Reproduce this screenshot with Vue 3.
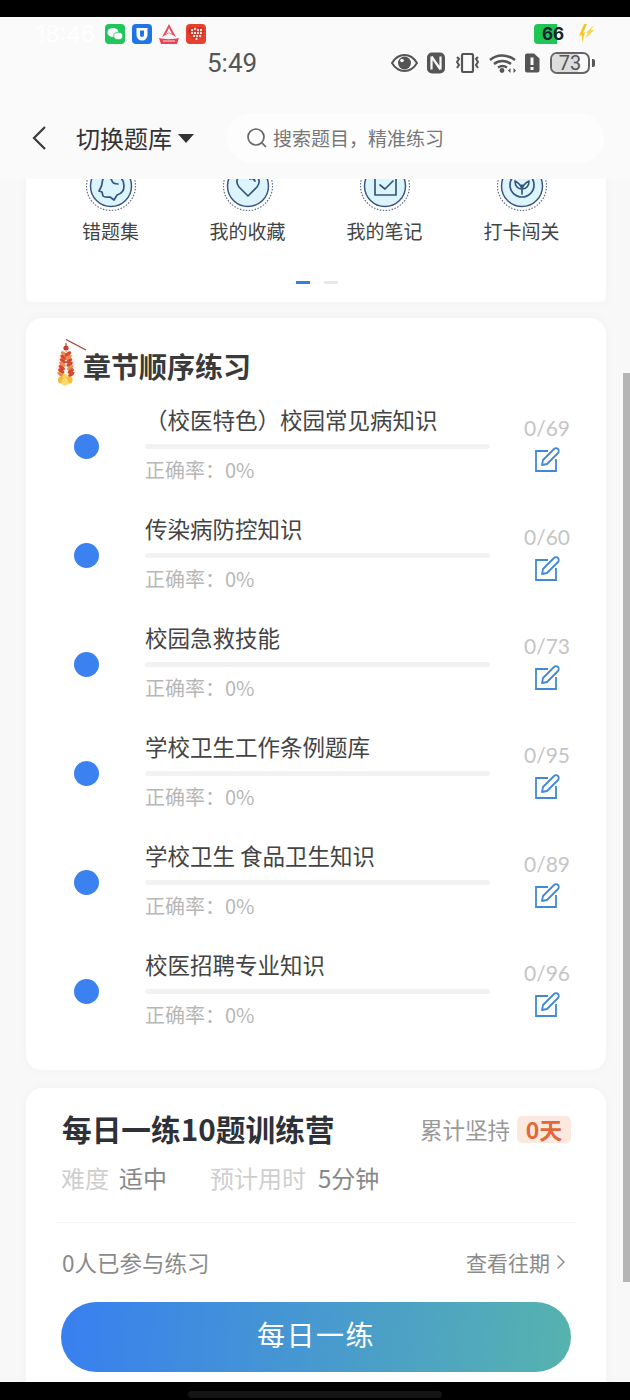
<script setup>
const tools = [
  { name: '错题集', path: 'M19 15c-4 4-2 8-4 11l-2 4 3 1 1 4c2 2 5 1 7 1l4 3 3-5c4-1 7-4 7-9 0-3-1-6-3-8M21 16c3-1 4 1 5 4s4 3 6 3' },
  { name: '我的收藏', path: 'M25 35l-9-9c-3-4-3-8 1-11 3-2 6-2 8 1 2-3 6-3 8-1 4 3 4 7 1 11zM27 18c2-1 4 0 5 2' },
  { name: '我的笔记', path: 'M20 14h-5v20h21V18M20 24l5 4 8-8M32 13l2 0' },
  { name: '打卡闯关', path: 'M25 36c-6.500 0-12-5-12-12s5.500-12 12-12 12 5 12 12-5.500 12-12 12zM25 33v-5c-1-4-3-6-7-8 0 5 3 8 7 8 4 0 7-3 7-8-4 2-6 4-7 8M25 28v-4' },
]
const chapters = [
  { title: '（校医特色）校园常见病知识', total: 69 },
  { title: '传染病防控知识', total: 60 },
  { title: '校园急救技能', total: 73 },
  { title: '学校卫生工作条例题库', total: 95 },
  { title: '学校卫生 食品卫生知识', total: 89 },
  { title: '校医招聘专业知识', total: 96 },
]
const crackers = []
for (let row = 0; row < 7; row++) {
  const y = 16 + row * 3.4
  const spread = 2 + row * 0.55
  crackers.push({ x: 12 - spread, y, rot: 35 })
  crackers.push({ x: 12 + spread, y, rot: -35 })
}
const heartDots = [[6,6],[9,5],[6,9],[9,9],[12,6],[15,6],[12,9],[15,9],[8,12],[11,12],[14,12],[10.500,15]]
</script>

<template>
  <div class="phone">
    <div class="black-top"></div>
    <div class="screen">
      <header class="header">
        <div class="ghost-row">
          <span class="ghost-time">18:46</span>
          <div class="apps">
            <svg class="app" viewBox="0 0 20 20"><rect width="20" height="20" rx="4" fill="#1fc65c"/><ellipse cx="8" cy="8.500" rx="5.500" ry="4.600" fill="#fff"/><ellipse cx="13.200" cy="12" rx="4.500" ry="3.700" fill="#fff" stroke="#1fc65c" stroke-width=".8"/></svg>
            <svg class="app" viewBox="0 0 20 20"><rect width="20" height="20" rx="4" fill="#1f75e6"/><path d="M4.500 4h11v7a5.500 5.500 0 0 1-11 0z" fill="#fff"/><path d="M8 6.500v4.500a2 2 0 0 0 4 0V6.500z" fill="#1f75e6"/></svg>
            <svg class="app" viewBox="0 0 20 20"><path d="M10 0l7 13-7-4-7 4z" fill="#ef4a5c"/><path d="M10 4l3 6-3-1.500L7 10z" fill="#fff"/><path d="M0 14c6 1.500 14 1.500 20 0l-2 6H2z" fill="#ea4155"/><path d="M4 17h12" stroke="#fff" stroke-width=".8"/></svg>
            <svg class="app" viewBox="0 0 20 20"><rect width="20" height="20" rx="4" fill="#e8402f"/><path d="M10 17L3 10C1 7 3 3 6 3c2 0 3 1 4 2 1-1 2-2 4-2 3 0 5 4 3 7z" fill="#c92c20"/><circle v-for="(d, i) in heartDots" :key="i" :cx="d[0]" :cy="d[1]" r="1.200" fill="#fbe3da"/></svg>
          </div>
          <span class="spacer"></span>
          <span class="badge66"><i class="badge-text">66</i></span>
          <svg class="bolt" viewBox="0 0 18 20"><path d="M7 0h3L6 9l2-1-3 11 0-8-3 1z" fill="#f4c724"/><path d="M17 1L9 9l2 0-3 6 9-9-3 0z" fill="#f7d64f"/></svg>
        </div>

        <div class="status-row">
          <span class="time">5:49</span>
          <div class="status-icons">
            <svg width="27" height="18" viewBox="0 0 27 18"><path d="M1 9c3-5 7-8 12.500-8S23 4 26 9c-3 5-7 8-12.500 8S4 14 1 9z" fill="none" stroke="#555" stroke-width="2"/><circle cx="13.500" cy="9" r="6.500" fill="#555"/><circle cx="11" cy="6.500" r="1.800" fill="#fafafa"/></svg>
            <svg width="20" height="22" viewBox="0 0 20 22"><rect x="1" y="0.500" width="18" height="21" rx="5" fill="#555"/><path d="M5.500 4.500v13M14.500 4.500v13M5.500 4.500l9 13" stroke="#fafafa" stroke-width="2.200" fill="none"/></svg>
            <svg width="27" height="20" viewBox="0 0 27 20"><rect x="8" y="1" width="11" height="18" rx="1.500" fill="none" stroke="#555" stroke-width="2.200"/><path d="M3 4l2 2-2 3 2 3-2 3M24 4l-2 2 2 3-2 3 2 3" fill="none" stroke="#555" stroke-width="2"/></svg>
            <svg width="27" height="20" viewBox="0 0 27 20"><path d="M1 7c7-6 17-6 25 0M5 11c5-4 12-4 17 0M9 14.500c3-2 6-2 9 0" fill="none" stroke="#555" stroke-width="2.400"/><circle cx="13" cy="17.500" r="2.400" fill="#555"/><path d="M19 17.500l2.500-2.500v5zM27 17.500L24.500 15v5z" fill="#555"/></svg>
            <svg width="16" height="20" viewBox="0 0 16 20"><path d="M3 0.500h7l5.500 5v12a2 2 0 0 1-2 2H3a2 2 0 0 1-2-2v-15a2 2 0 0 1 2-2z" fill="#555"/><rect x="6.500" y="4.500" width="3" height="7.500" fill="#fafafa"/><rect x="6.500" y="14" width="3" height="3" fill="#fafafa"/></svg>
            <div class="battery"><span class="battery-fill"></span><b class="battery-num">73</b></div>
            <span class="battery-tip"></span>
          </div>
        </div>

        <div class="nav">
          <svg class="back" width="16" height="26" viewBox="0 0 16 26"><path d="M14 2L3 13l11 11" fill="none" stroke="#3a3a3a" stroke-width="2.200"/></svg>
          <span class="switch">切换题库</span>
          <svg class="caret" width="16" height="9" viewBox="0 0 16 9"><path d="M0 0h16L8 9z" fill="#333"/></svg>
          <div class="search">
            <svg width="22" height="22" viewBox="0 0 22 22"><circle cx="10" cy="10" r="8" fill="none" stroke="#666" stroke-width="1.700"/><path d="M16 16l4 4" stroke="#666" stroke-width="1.700"/></svg>
            <span class="search-text">搜索题目，精准练习</span>
          </div>
        </div>
      </header>

      <main class="scroller">
        <section class="card tools-card">
          <div class="tools">
            <div v-for="t in tools" :key="t.name" class="tool">
              <svg width="50" height="50" viewBox="0 0 50 50">
                <circle cx="25" cy="25" r="24.500" fill="none" stroke="#5d6f92" stroke-width="1.200" stroke-dasharray="1.500 1.500"/>
                <circle cx="25" cy="25" r="20.500" fill="#dcf5fd" stroke="#3c5680" stroke-width="1.500"/>
                <path :d="t.path" fill="none" stroke="#34567f" stroke-width="1.700" stroke-linejoin="round" stroke-linecap="round"/>
              </svg>
              <span class="tool-name">{{ t.name }}</span>
            </div>
          </div>
          <div class="dots"><i class="dot-on"></i><i class="dot-off"></i></div>
        </section>

        <section class="card chapter-card">
          <div class="chapter-head">
            <svg class="cracker" width="34" height="52" viewBox="0 0 34 52">
              <path d="M12 1.500L32 12" stroke="#a83a3a" stroke-width="1.300"/>
              <path d="M12 5v9" stroke="#c8402e" stroke-width="1.200"/>
              <circle cx="12" cy="10" r="2.600" fill="#c8402e"/>
              <ellipse cx="12" cy="30" rx="10" ry="18" fill="#fbe9df" opacity=".5"/>
              <ellipse v-for="(c, i) in crackers" :key="i" :cx="c.x" :cy="c.y" rx="3.600" ry="1.700" :transform="`rotate(${c.rot} ${c.x} ${c.y})`" :fill="i % 3 ? '#d4472c' : '#e78a4a'"/>
              <circle cx="7.500" cy="42" r="3.600" fill="#f1bd3a"/><circle cx="15" cy="42" r="3.600" fill="#f1bd3a"/><circle cx="11" cy="44" r="3.400" fill="#f8d96a"/><circle cx="11" cy="38.500" r="2.500" fill="#f7d35c"/>
            </svg>
            <h2 class="chapter-title">章节顺序练习</h2>
          </div>
          <div v-for="c in chapters" :key="c.title" class="chapter">
            <span class="chapter-dot"></span>
            <div class="chapter-main">
              <div class="chapter-name">{{ c.title }}</div>
              <div class="bar"></div>
              <div class="rate">正确率：0%</div>
            </div>
            <div class="chapter-side">
              <span class="count">0/{{ c.total }}</span>
              <svg width="26" height="26" viewBox="0 0 26 26"><path d="M14 4H2v20h20V12" fill="none" stroke="#4189d6" stroke-width="1.800"/><path d="M8 18l1-5L20 2c1-1 3-1 4 0s1 3 0 4L13 17z" fill="none" stroke="#4189d6" stroke-width="1.800" stroke-linejoin="round"/></svg>
            </div>
          </div>
        </section>

        <section class="card daily-card">
          <div class="daily-top">
            <h2 class="daily-title">每日一练10题训练营</h2>
            <div class="streak"><span>累计坚持</span><b class="streak-tag">0天</b></div>
          </div>
          <div class="meta">
            <span class="meta-label">难度</span><span class="meta-value first">适中</span>
            <span class="meta-label">预计用时</span><span class="meta-value">5分钟</span>
          </div>
          <div class="divider"></div>
          <div class="join-row">
            <span class="join-text">0人已参与练习</span>
            <span class="history">查看往期<svg width="10" height="16" viewBox="0 0 10 16"><path d="M1.500 1.500L8 8l-6.500 6.500" fill="none" stroke="#888" stroke-width="1.400"/></svg></span>
          </div>
          <button class="cta">每日一练</button>
        </section>
      </main>
      <div class="scrollbar"></div>
    </div>
    <div class="black-bottom"><span class="home-pill"></span></div>
  </div>
</template>

<style>
html, body { margin: 0; background: #000; }
</style>

<style scoped>
.phone {
  width: 630px; height: 1400px; display: flex; flex-direction: column; overflow: hidden;
  font-family: "Noto Sans CJK SC", "Noto Sans", sans-serif; background: #000;
}
.black-top { height: 17px; flex: none; background: #000; }
.black-bottom { height: 18px; flex: none; background: #000; display: flex; justify-content: center; align-items: center; }
.home-pill { width: 254px; height: 7px; border-radius: 4px; background: #151515; margin-top: 7px; }
.screen { flex: 1; min-height: 0; position: relative; display: flex; flex-direction: column; background: #f8f8f8; overflow: hidden; }

.header { flex: none; height: 162px; box-sizing: border-box; background: #fafafa; position: relative; z-index: 2; padding-top: 7px; }
.ghost-row { height: 20px; display: flex; align-items: center; padding-left: 36px; }
.ghost-time { width: 69px; font: 400 23px/20px "Inter", sans-serif; color: #fff; white-space: nowrap; }
.apps { display: flex; gap: 7px; }
.app { width: 20px; height: 20px; display: block; }
.spacer { flex: 1; }
.badge66 { width: 23px; height: 20px; background: #1fc653; border-radius: 4px 0 0 4px; position: relative; margin-right: 20px; }
.badge-text { position: absolute; left: 8px; top: 0; font: 700 17px/20px "Inter", sans-serif; color: #123; font-style: normal; }
.bolt { width: 18px; height: 20px; margin-right: 35px; }

.status-row { height: 26px; margin-top: 6px; display: flex; align-items: center; padding-left: 207px; }
.time { width: 184px; font: 400 26px/26px "Roboto", sans-serif; color: #555; }
.status-icons { display: flex; align-items: center; gap: 8px; }
.battery { width: 40px; height: 22px; box-sizing: border-box; border: 2px solid #666; border-radius: 7px; position: relative; overflow: hidden; margin-left: 2px; }
.battery-fill { position: absolute; left: 0; top: 0; bottom: 0; width: 73%; background: #dcdcdc; }
.battery-num { position: absolute; inset: 0; text-align: center; font: 400 20px/18px "Roboto", sans-serif; color: #555; }
.battery-tip { width: 3px; height: 8px; background: #555; border-radius: 0 2px 2px 0; margin-left: -6px; }

.nav { height: 50px; margin-top: 37px; display: flex; align-items: center; }
.back { margin-left: 31px; }
.switch { margin-left: 29px; font-size: 24px; line-height: 34px; color: #333; white-space: nowrap; }
.caret { margin-left: 6px; }
.search {
  margin-left: 33px; width: 377px; height: 50px; box-sizing: border-box; padding-left: 19px;
  display: flex; align-items: center; gap: 5px; border-radius: 25px; background: #fdfdfd;
  font-size: 19px; color: #777; white-space: nowrap;
}
.search-text { position: relative; top: -1px; }

.scroller { flex: 1; min-height: 0; overflow: hidden; padding: 0 24px 0 26px; display: flex; flex-direction: column; gap: 16px; }
.card { background: #fff; flex: none; box-shadow: 0 0 12px rgba(0,0,0,.03); }
.tools-card { border-radius: 0 0 6px 6px; overflow: hidden; padding: 0 14px 18px 16px; }
.tools { display: grid; grid-template-columns: repeat(4, 137px); margin-top: -18px; }
.tool { display: flex; flex-direction: column; align-items: center; }
.tool svg { display: block; }
.tool-name { margin-top: 6px; font-size: 19px; line-height: 28px; color: #444; white-space: nowrap; }
.dots { margin-top: 36px; display: flex; justify-content: center; gap: 14px; padding-right: 1px; }
.dots i { width: 14px; height: 3px; display: block; }
.dot-on { background: #3a7de0; }
.dot-off { background: #e8e8e8; }

.chapter-card { border-radius: 16px; padding: 31px 0 24px; }
.chapter-head { height: 36px; margin-bottom: 7px; display: flex; align-items: center; padding-left: 28px; }
.cracker { flex: none; margin-right: -5px; margin-top: -6px; }
.chapter-title { margin: -3px 0 0; font-size: 28px; line-height: 34px; font-weight: 700; color: #3a3a3a; white-space: nowrap; }
.chapter { height: 109px; display: flex; align-items: center; }
.chapter-dot { width: 25px; height: 25px; border-radius: 50%; background: #3b82f0; margin-left: 48px; flex: none; }
.chapter-main { width: 345px; margin-left: 46px; align-self: flex-start; padding-top: 12px; }
.chapter-name { font-size: 22.500px; line-height: 30px; color: #444; white-space: nowrap; }
.bar { height: 5px; margin-top: 10px; border-radius: 3px; background: #f2f2f2; }
.rate { margin-top: 7px; font-size: 20px; line-height: 28px; color: #b7b7b7; white-space: nowrap; }
.chapter-side { flex: 1; align-self: flex-start; padding: 20px 2px 0 0; display: flex; flex-direction: column; align-items: center; }
.count { font: 400 21px/32px "Lato", sans-serif; color: #c5c5c5; }
.chapter-side svg { margin-top: 3px; display: block; }

.daily-card { border-radius: 16px 16px 0 0; padding: 21px 35px 40px 35px; margin-top: 2px; }
.daily-top { height: 40px; display: flex; align-items: center; justify-content: space-between; }
.daily-title { margin: 0 0 0 1px; font-size: 29.700px; line-height: 40px; font-weight: 700; color: #2e3238; white-space: nowrap; }
.streak { display: flex; align-items: center; gap: 7px; font-size: 22.500px; color: #999; white-space: nowrap; }
.streak-tag { width: 54px; height: 27px; text-align: center; line-height: 27px; font-size: 23px; border-radius: 5px; background: #fbe9df; color: #e2673a; }
.meta { margin-top: 13px; height: 32px; display: flex; align-items: center; font-size: 24px; line-height: 32px; white-space: nowrap; }
.meta-label { color: #cfcfcf; }
.meta-value { color: #888; margin-left: 12px; }
.meta-value.first { margin-left: 10px; margin-right: 43px; }
.divider { height: 1px; margin: 28px -6px 0; background: #f7f7f7; }
.join-row { margin-top: 23px; height: 32px; display: flex; align-items: center; justify-content: space-between; font-size: 21px; color: #8a8a8a; white-space: nowrap; }
.join-text { font-size: 22.500px; margin-left: 1px; }
.history { display: flex; align-items: center; gap: 6px; padding-right: 5px; }
.cta {
  display: block; width: 510px; height: 70px; margin-top: 24px; border: 0; border-radius: 35px; padding: 0 0 4px;
  background: linear-gradient(95deg, #387ff0 0%, #56b3ae 100%); color: #fff;
  font: 400 28px/1.400 "Noto Sans CJK SC", sans-serif; letter-spacing: 1.500px;
}
.scrollbar { position: absolute; right: 0; top: 356px; width: 7px; height: 909px; background: #b5b5b5; z-index: 1; }
</style>
